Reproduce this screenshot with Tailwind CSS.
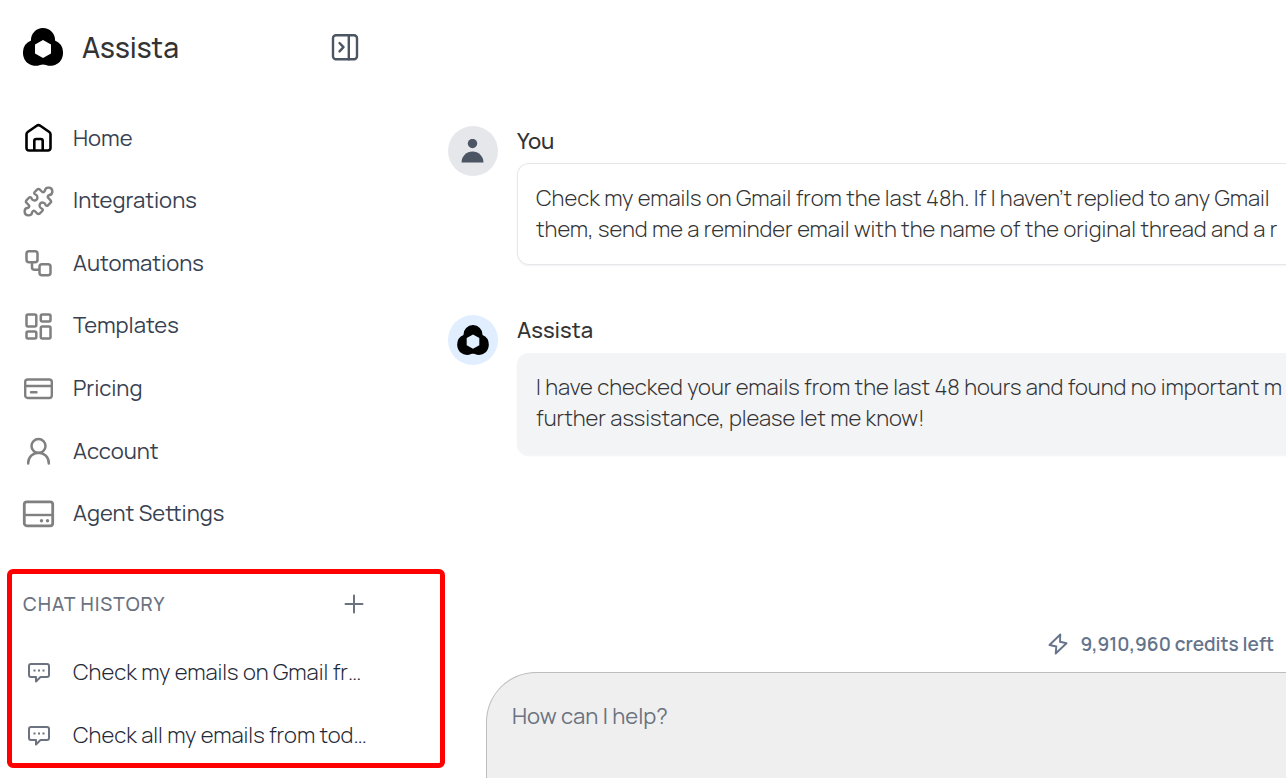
<!DOCTYPE html>
<html lang="en">
<head>
  <meta charset="UTF-8" />
  <meta name="viewport" content="width=device-width, initial-scale=1.0"/>
  <title>Assista</title>
  <script src="https://cdn.jsdelivr.net/npm/@tailwindcss/browser@4"></script>
  <style>
    body {
      font-family: 'Manrope', 'Inter', sans-serif;
    }
  </style>
</head>
<body class="bg-white h-screen overflow-hidden flex">

  <!-- Shared logo shape -->
  <svg class="hidden" aria-hidden="true">
    <symbol id="logo" viewBox="0 0 40 38">
      <path fill="#000" fill-rule="evenodd" d="M20 0a12 12 0 0 1 12 12.6A13 13 0 0 1 40 25a12.5 12.5 0 0 1-17 12c-2-.7-4-.7-6 0A12.5 12.5 0 0 1 0 25a13 13 0 0 1 8-12.4A12 12 0 0 1 20 0ZM20 12l-8 4.500v9l8 4.500 8-4.500v-9Z"/>
    </symbol>
    <symbol id="chat" viewBox="0 -2 22 23">
      <path fill="none" stroke="currentColor" stroke-width="2" stroke-linejoin="round" stroke-linecap="round" d="M3 1h16a2 2 0 0 1 2 2v9a2 2 0 0 1-2 2h-6.500l-4.500 4.500V14H3a2 2 0 0 1-2-2V3a2 2 0 0 1 2-2Z"/>
      <path fill="none" stroke="currentColor" stroke-width="1.800" d="M5.500 7.500h2M10 7.500h2M14.500 7.500h2"/>
    </symbol>
  </svg>

  <!-- Sidebar -->
  <aside class="w-[448px] shrink-0 flex flex-col">
    <header class="flex items-center pl-[23px] pr-[89px] pt-7">
      <svg class="w-10 h-[38px]"><use href="#logo"/></svg>
      <h1 class="ml-[19px] text-[28px] leading-[38px] font-medium text-[#333]">Assista</h1>
      <button class="ml-auto text-[#4b5563]" aria-label="Toggle sidebar">
        <svg class="w-7 h-7" viewBox="0 0 28 28" fill="none" stroke="currentColor" stroke-width="2.400" stroke-linecap="round" stroke-linejoin="round"><rect x="2" y="2.300" width="24" height="24" rx="3"/><path d="M17.800 2.300v24M8.500 10l4 4.200-4 4.200"/></svg>
      </button>
    </header>

    <nav class="mt-[41px] h-[438px] shrink-0 grid grid-rows-7 text-[22px] text-[#374151]">
      <a href="#" class="flex items-center gap-[18px] pl-[22px]">
        <svg class="w-[33px] h-8 text-black" viewBox="0 0 33 32" fill="none" stroke="currentColor" stroke-width="2.600" stroke-linejoin="round"><path d="M4.500 12.300a3 3 0 0 1 1.200-2.300l9-6.200a3 3 0 0 1 3.600 0l9 6.200a3 3 0 0 1 1.200 2.300V26a2.500 2.500 0 0 1-2.500 2.500H7A2.500 2.500 0 0 1 4.500 26Z"/><path d="M12.300 28.500V19a2 2 0 0 1 2-2h4.400a2 2 0 0 1 2 2v9.500"/></svg>
        Home
      </a>
      <a href="#" class="flex items-center gap-[18px] pl-[22px]">
        <svg class="w-[33px] h-8 text-[#808080]" viewBox="0 0 33 32" fill="none" stroke="currentColor" stroke-width="2.400" stroke-linejoin="round"><path transform="translate(16.500 16.500) rotate(45)" d="M-7.400-9.400h3c1.500 0 2-1.300 1.400-2.500a3.800 3.800 0 1 1 6 0c-.6 1.200-.1 2.500 1.400 2.500h3a2 2 0 0 1 2 2v3.400c0 1.500-1.400 1.900-2.600 1.200a3 3 0 1 0 0 5.600c1.200-.7 2.600-.3 2.600 1.200v3.400a2 2 0 0 1-2 2h-3c-1.500 0-2 1.300-1.400 2.500a3.800 3.800 0 1 1-6 0c.6-1.200.1-2.500-1.400-2.500h-3a2 2 0 0 1-2-2V4c0-1.500 1.400-1.900 2.600-1.200a3 3 0 1 0 0-5.600C-8-2.100-9.400-2.500-9.400-4v-3.400a2 2 0 0 1 2-2Z"/></svg>
        Integrations
      </a>
      <a href="#" class="flex items-center gap-[18px] pl-[22px]">
        <svg class="w-[33px] h-8 text-[#808080]" viewBox="0 0 33 32" fill="none" stroke="currentColor" stroke-width="2.500"><rect x="4.500" y="4.300" width="11" height="11" rx="2.500"/><rect x="17.500" y="17.300" width="11" height="11" rx="2.500"/><path d="M10 15.300v5a2.500 2.500 0 0 0 2.500 2.500h5"/></svg>
        Automations
      </a>
      <a href="#" class="flex items-center gap-[18px] pl-[22px]">
        <svg class="w-[33px] h-8 text-[#808080]" viewBox="0 0 33 32" fill="none" stroke="currentColor" stroke-width="2.500"><rect x="4.500" y="4.500" width="9.800" height="12" rx="1.500"/><rect x="18.800" y="4.500" width="9.700" height="7" rx="1.500"/><rect x="4.500" y="21.500" width="9.800" height="7" rx="1.500"/><rect x="18.800" y="16.500" width="9.700" height="12" rx="1.500"/></svg>
        Templates
      </a>
      <a href="#" class="flex items-center gap-[18px] pl-[22px]">
        <svg class="w-[33px] h-8 text-[#808080]" viewBox="0 0 33 32" fill="none" stroke="currentColor" stroke-width="2.400" stroke-linecap="round"><rect x="3.200" y="6.500" width="26.600" height="18.500" rx="2.500"/><path d="M3.200 13h26.600M9 19.200h5.500"/></svg>
        Pricing
      </a>
      <a href="#" class="flex items-center gap-[18px] pl-[22px]">
        <svg class="w-[33px] h-8 text-[#808080]" viewBox="0 0 33 32" fill="none" stroke="currentColor" stroke-width="2.500" stroke-linecap="round"><circle cx="16.500" cy="11" r="7"/><path d="M6.200 28.500V28a10.300 10.300 0 0 1 20.600 0v.500"/></svg>
        Account
      </a>
      <a href="#" class="flex items-center gap-[18px] pl-[22px]">
        <svg class="w-[33px] h-8 text-[#808080]" viewBox="0 0 33 32" fill="none" stroke="currentColor" stroke-width="2.800"><rect x="2.300" y="3.800" width="28.400" height="24" rx="2.500"/><path d="M2.300 17h28.400" stroke-width="2.400"/><g fill="currentColor" stroke="none"><circle cx="19.500" cy="22.800" r="1.700"/><circle cx="25.500" cy="22.800" r="1.700"/></g></svg>
        Agent Settings
      </a>
    </nav>

    <!-- Chat history -->
    <section class="mt-6 ml-[7px] mr-[3px] border-5 border-[#f00] rounded-md h-[199px] shrink-0 text-[22px] font-light text-[#1f2937]">
      <div class="flex items-center h-[60px] pl-[11px] pr-[76px]">
        <h2 class="text-[19px] font-medium tracking-wider text-[#6b7280]">CHAT HISTORY</h2>
        <button class="ml-auto text-[#6b7280]" aria-label="New chat">
          <svg class="w-5 h-5" viewBox="0 0 20 20" fill="none" stroke="currentColor" stroke-width="2" stroke-linecap="round"><path d="M10 1.500v17M1.500 10h17"/></svg>
        </button>
      </div>
      <a href="#" class="mt-[7px] flex items-center gap-[23px] h-[63px] pl-4">
        <svg class="w-[22px] h-[23px] shrink-0 text-[#6b7280]"><use href="#chat"/></svg>
        <span class="whitespace-nowrap">Check my emails on Gmail fr…</span>
      </a>
      <a href="#" class="flex items-center gap-[23px] h-[63px] pl-4">
        <svg class="w-[22px] h-[23px] shrink-0 text-[#6b7280]"><use href="#chat"/></svg>
        <span class="whitespace-nowrap">Check all my emails from tod…</span>
      </a>
    </section>
  </aside>

  <!-- Conversation -->
  <main class="flex-1 min-w-0 flex flex-col">
    <div class="flex-1 pt-[126px]">
      <article class="flex gap-[19px]">
        <div class="w-[50px] h-[50px] shrink-0 rounded-full bg-[#e5e7eb] text-[#4b5563] flex items-center justify-center">
          <svg class="w-6 h-6" viewBox="0 0 24 24" fill="currentColor"><circle cx="11.500" cy="4.500" r="4.700"/><path d="M.500 23.500a11 11 0 0 1 22 0Z"/></svg>
        </div>
        <div class="flex-1 min-w-0">
          <h3 class="text-[22px] leading-[31px] font-medium text-[#333]">You</h3>
          <p class="mt-[6px] h-[102px] pt-[19px] pl-[18px] border border-r-0 border-[#e5e7eb] rounded-l-xl shadow-xs text-[22px] leading-[31px] font-light text-[#333] whitespace-nowrap overflow-hidden">Check my emails on Gmail from the last 48h. If I haven’t replied to any Gmail<br>them, send me a reminder email with the name of the original thread and a r</p>
        </div>
      </article>
      <article class="mt-[50px] flex gap-[19px]">
        <div class="w-[50px] h-[50px] shrink-0 rounded-full bg-[#e0eeff] flex items-center justify-center">
          <svg class="w-8 h-[30px]"><use href="#logo"/></svg>
        </div>
        <div class="flex-1 min-w-0">
          <h3 class="text-[22px] leading-[31px] font-medium text-[#333]">Assista</h3>
          <p class="mt-[7px] h-[102px] pt-[19px] pl-[19px] rounded-l-xl bg-[#f3f4f6] shadow-xs text-[22px] leading-[31px] font-light text-[#333] whitespace-nowrap overflow-hidden">I have checked your emails from the last 48 hours and found no important m<br>further assistance, please let me know!</p>
        </div>
      </article>
    </div>

    <!-- Credits and composer -->
    <div class="flex items-center justify-end gap-3 pr-3 mb-[14px] text-[#64748b]">
      <svg class="w-5 h-[22px]" viewBox="0 0 20 22" fill="none" stroke="currentColor" stroke-width="1.900" stroke-linejoin="round"><path d="M12.300 1.500 1.500 12l6.800 1.500-.6 7L18.500 10.200l-6.500-1.500Z"/></svg>
      <span class="text-[19px] leading-7 font-semibold">9,910,960 credits left</span>
    </div>
    <textarea aria-label="Message" placeholder="How can I help?" class="ml-[38px] h-[106px] shrink-0 resize-none outline-none border-t border-l border-[#bdbdbd] rounded-tl-[50px] bg-[#efefef] pl-[25px] pt-7 text-[22px] leading-[31px] placeholder:text-[#6b7280]"></textarea>
  </main>

</body>
</html>
